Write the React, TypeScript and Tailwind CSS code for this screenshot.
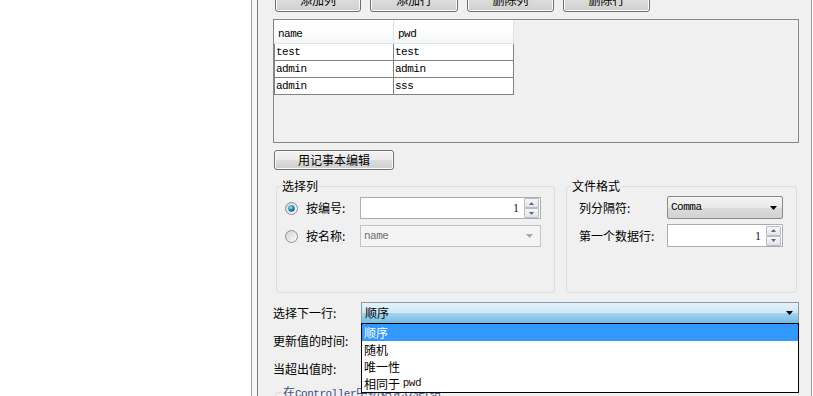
import React from "react"

const mono = "font-['Liberation_Mono','DejaVu_Sans_Mono',monospace] text-[11px] tracking-[-0.5px]"

const tableRows = [
  ["test", "test"],
  ["admin", "admin"],
  ["admin", "sss"],
]

const options = ["顺序", "随机", "唯一性"]

function Arrow({ color = "#000" }: { color?: string }) {
  return (
    <svg width="7" height="4" viewBox="0 0 7 4">
      <path d="M0 0h7L3.5 4z" fill={color} />
    </svg>
  )
}

function WinButton({ label, className }: { label: string; className: string }) {
  return (
    <div
      className={`flex shrink-0 items-center justify-center rounded-[3px] border border-[#707070] bg-[linear-gradient(#f2f2f2,#ebebeb_50%,#dddddd_50%,#cfcfcf)] shadow-[inset_0_0_0_1px_#fbfbfb] text-[12px] leading-none ${className}`}
    >
      {label}
    </div>
  )
}

function SpinHalf({ up }: { up?: boolean }) {
  return (
    <div className="flex h-[10px] w-[15px] items-center justify-center rounded-[1px] border border-[#b9bcc2] bg-[linear-gradient(#f7f7f7,#e2e3e6)]">
      <svg width="5" height="3" viewBox="0 0 5 3">
        <path d={up ? "M0 3h5L2.5 0z" : "M0 0h5L2.5 3z"} fill="#51688f" />
      </svg>
    </div>
  )
}

function Spinner({ className }: { className: string }) {
  return (
    <div className={`flex items-center border border-[#abadb3] bg-white ${className}`}>
      <span className="flex-1 pr-[5px] text-right font-['Liberation_Serif',serif] text-[12px] leading-none text-[#1a0a2a]">
        1
      </span>
      <div className="flex flex-col pr-px">
        <SpinHalf up />
        <SpinHalf />
      </div>
    </div>
  )
}

function Radio({ checked }: { checked?: boolean }) {
  return (
    <svg width="13" height="13" viewBox="0 0 13 13" className="shrink-0">
      <defs>
        <linearGradient id="rbg" x1="0" y1="0" x2="1" y2="1">
          <stop offset="0" stopColor="#d2d2d2" />
          <stop offset="1" stopColor="#fbfbfb" />
        </linearGradient>
        <radialGradient id="rdot" cx="0.4" cy="0.35" r="0.7">
          <stop offset="0" stopColor="#b5ecff" />
          <stop offset="0.45" stopColor="#2c93cf" />
          <stop offset="1" stopColor="#0c4a77" />
        </radialGradient>
      </defs>
      <circle cx="6.5" cy="6.5" r="6" fill="url(#rbg)" stroke="#8e8f8f" />
      {checked && <circle cx="6.5" cy="6.5" r="3.2" fill="url(#rdot)" />}
    </svg>
  )
}

function Group({ title, className, children }: { title: string; className: string; children?: React.ReactNode }) {
  return (
    <div className={`relative shrink-0 rounded-[3px] border border-[#d5dfe5] ${className}`}>
      <span className="absolute -top-[9px] left-[4px] bg-[#f0f0f0] px-px text-[12px] leading-[16px]">{title}</span>
      {children}
    </div>
  )
}

export default function App() {
  return (
    <div className="flex h-[396px] w-[813px] overflow-hidden bg-white font-['Noto_Sans_CJK_SC',sans-serif] text-[12px] text-black">
      <div className="w-[251px] shrink-0" />
      <div className="w-px shrink-0 bg-[#a0a0a0]" />
      <div className="w-[5px] shrink-0 bg-[#f8f8f8]" />
      <div className="w-px shrink-0 bg-[#7c7c7c]" />

      {/* main panel */}
      <div className="flex w-[553px] shrink-0 flex-col bg-[#f0f0f0] pl-[15px] pr-[12px]">
        {/* buttons */}
        <div className="-mt-[12px] ml-[2px] flex gap-[9px]">
          <WinButton label="添加列" className="h-[24px] w-[86px]" />
          <WinButton label="添加行" className="h-[24px] w-[88px]" />
          <WinButton label="删除列" className="h-[24px] w-[87px]" />
          <WinButton label="删除行" className="h-[24px] w-[87px]" />
        </div>

        {/* table */}
        <div className="mt-[7px] h-[124px] shrink-0 border border-[#828790] bg-[#f0f0f0]">
          <div className={`w-[240px] ${mono}`}>
            <div className="flex h-[24px]">
              {["name", "pwd"].map((h) => (
                <div
                  key={h}
                  className="flex w-[120px] items-center border-r border-b border-r-[#e2e3e5] border-b-[#e4e5e7] bg-[linear-gradient(#ffffff,#ffffff_45%,#f5f6f7)] pt-[5px] pl-[4px]"
                >
                  {h}
                </div>
              ))}
            </div>
            {tableRows.map((r, i) => (
              <div key={i} className="flex h-[17px] border-b border-[#828282] bg-white">
                <div className="flex w-[119px] items-center border-l border-[#828282] pl-px">{r[0]}</div>
                <div className="flex w-[121px] items-center border-x border-[#828282] pl-px">{r[1]}</div>
              </div>
            ))}
          </div>
        </div>

        <WinButton label="用记事本编辑" className="mt-[7px] ml-px h-[20px] w-[120px]" />

        {/* group boxes */}
        <div className="mt-[16px] ml-[3px] flex gap-[11px]">
          <Group title="选择列" className="h-[107px] w-[279px]">
            <div className="flex flex-col gap-[6px] pt-[10px] pl-[8px]">
              <div className="flex h-[22px] items-center">
                <Radio checked />
                <span className="ml-[8px] w-[54px]">按编号:</span>
                <Spinner className="h-[22px] w-[181px]" />
              </div>
              <div className="flex h-[22px] items-center">
                <Radio />
                <span className="ml-[8px] w-[54px]">按名称:</span>
                <div className="flex h-[22px] w-[181px] items-center justify-between border border-[#c3c3c3] bg-[#f4f4f4] pr-[7px] pl-[3px]">
                  <span className={`${mono} text-[#6d6d6d]`}>name</span>
                  <Arrow color="#a7a7a7" />
                </div>
              </div>
            </div>
          </Group>

          <Group title="文件格式" className="h-[107px] w-[231px]">
            <div className="flex flex-col gap-[5px] pt-[9px] pl-[12px]">
              <div className="flex h-[23px] items-center">
                <span className="w-[88px]">列分隔符:</span>
                <div className="flex h-[23px] w-[116px] items-center justify-between rounded-[2px] border border-[#8a8a8a] bg-[linear-gradient(#f4f4f4,#e9e9e9_50%,#dcdcdc_50%,#d2d2d2)] pr-[5px] pl-[3px]">
                  <span className={mono}>Comma</span>
                  <Arrow />
                </div>
              </div>
              <div className="flex h-[23px] items-center">
                <span className="w-[88px]">第一个数据行:</span>
                <Spinner className="h-[23px] w-[116px]" />
              </div>
            </div>
          </Group>
        </div>

        {/* sharing rows */}
        <div className="mt-[9px] flex flex-col gap-[6px]">
          <div className="flex h-[22px] items-center">
            <span className="w-[88px] shrink-0">选择下一行:</span>
            <div className="relative h-[22px] w-[438px]">
              <div className="flex h-[22px] items-center justify-between border border-[#8d9aa6] bg-[linear-gradient(#e6f3fb,#cbe7f6_50%,#a5d5f0_50%,#74bde3)] pr-[5px] pl-[3px]">
                <span>顺序</span>
                <Arrow />
              </div>
              <div className="absolute top-[21px] left-0 z-10 w-[438px] border border-black bg-white">
                {options.map((o, i) => (
                  <div
                    key={o}
                    className={`flex h-[17px] items-center pl-[2px] ${i === 0 ? "bg-[#3399ff] text-white" : ""}`}
                  >
                    {o}
                  </div>
                ))}
                <div className="flex h-[17px] items-center pl-[2px]">
                  相同于&nbsp;<span className={`${mono} text-[#2a0a0a]`}>pwd</span>
                </div>
              </div>
            </div>
          </div>
          <div className="flex h-[22px] items-center">
            <span className="w-[88px] shrink-0">更新值的时间:</span>
            <div className="h-[22px] w-[438px] border border-[#8a8a8a] bg-[#e6e6e6]" />
          </div>
          <div className="flex h-[22px] items-center">
            <span className="w-[88px] shrink-0">当超出值时:</span>
            <div className="h-[22px] w-[438px] border border-[#8a8a8a] bg-[#e6e6e6]" />
          </div>
        </div>

        <div className="relative mt-[12px] ml-[2px] h-[40px] shrink-0 rounded-[3px] border border-[#d5dfe5]">
          <span className="absolute -top-[9px] left-[6px] bg-[#f0f0f0] px-px leading-[16px] text-[#3c4f82]">
            在<span className={mono}>Controller</span>中初始化User组
          </span>
        </div>
      </div>

      <div className="w-px shrink-0 bg-[#a0a0a0]" />
      <div className="flex-1" />
    </div>
  )
}
